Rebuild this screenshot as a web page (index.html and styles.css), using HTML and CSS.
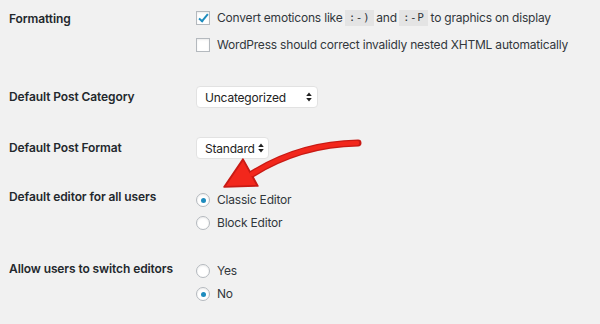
FILE: index.html
```html
<!DOCTYPE html>
<html lang="en">
	<head>
		<meta charset="UTF-8" />
		<title>Writing Settings</title>
		<link rel="stylesheet" href="styles.css">
	</head>
	<body>
		<div class="settings">
			<div class="row row-formatting">
				<div class="label">Formatting</div>
				<div class="field">
					<label class="option"><span class="checkbox checked"></span>Convert emoticons like <code>:-)</code> and <code>:-P</code> to graphics on display</label>
					<label class="option"><span class="checkbox"></span>WordPress should correct invalidly nested XHTML automatically</label>
				</div>
			</div>

			<div class="row row-select row-category">
				<div class="label">Default Post Category</div>
				<div class="field">
					<div class="select select-wide">
						<span>Uncategorized</span>
						<svg class="arrows" width="6" height="10" viewBox="0 0 6 10"><path d="M3 0.5 L5.8 4 H0.2 Z M3 9.5 L5.8 6 H0.2 Z" fill="#222" /></svg>
					</div>
				</div>
			</div>

			<div class="row row-select row-format">
				<div class="label">Default Post Format</div>
				<div class="field">
					<div class="select">
						<span>Standard</span>
						<svg class="arrows" width="6" height="10" viewBox="0 0 6 10"><path d="M3 0.5 L5.8 4 H0.2 Z M3 9.5 L5.8 6 H0.2 Z" fill="#222" /></svg>
					</div>
				</div>
			</div>

			<div class="row row-radio row-editor">
				<div class="label">Default editor for all users</div>
				<div class="field">
					<label class="option"><span class="radio checked"></span>Classic Editor</label>
					<label class="option"><span class="radio"></span>Block Editor</label>
				</div>
			</div>

			<div class="row row-radio row-switch">
				<div class="label">Allow users to switch editors</div>
				<div class="field">
					<label class="option"><span class="radio"></span>Yes</label>
					<label class="option"><span class="radio checked"></span>No</label>
				</div>
			</div>
		</div>

		<!-- annotation arrow drawn over the form -->
		<svg class="annotation" width="600" height="324" viewBox="0 0 600 324">
			<path d="M358 143 Q300 144 252 174" fill="none" stroke="#c81a14" stroke-width="7" stroke-linecap="round" />
			<polygon points="243,159 224,187 258,186" fill="#c81a14" stroke="#c81a14" stroke-width="1.5" stroke-linejoin="round" />
			<path d="M357 143 Q300 144 252 174" fill="none" stroke="#f2271c" stroke-width="4.5" stroke-linecap="round" />
			<polygon points="243,161 226,186 256,185" fill="#f2271c" />
		</svg>
	</body>
</html>
```

FILE: styles.css
```css
:root {
	--bg-color: #f1f1f1;
	--label-color: #23282d;
	--text-color: #32373c;
	--border-color: #b4b9be;
	--accent: #1e8cbe;
	--code-bg: #e4e4e4;
}

body {
	margin: 0;
	width: 600px;
	height: 324px;
	overflow: hidden;
	background-color: var(--bg-color);
	font-family: "Inter", "Liberation Sans", sans-serif;
	font-size: 12px;
	letter-spacing: -0.05px;
	color: var(--text-color);
}

.settings {
	display: flex;
	flex-direction: column;
	padding-left: 9px;
}

.row {
	display: grid;
	grid-template-columns: 187px 1fr;
	align-items: start;
}

.label {
	font-weight: 600;
	color: var(--label-color);
	line-height: 18px;
	letter-spacing: -0.1px;
}

.field {
	display: flex;
	flex-direction: column;
	letter-spacing: -0.2px;
}

.option {
	display: flex;
	align-items: center;
	height: 18px;
	line-height: 18px;
	white-space: pre;
}

/* formatting checkboxes */
.row-formatting {
	padding-top: 9px;
}

.row-formatting .label {
	padding-top: 1px;
}

.row-formatting .field {
	gap: 9px;
}

.checkbox {
	width: 12px;
	height: 12px;
	margin-right: 7px;
	border: 1px solid var(--border-color);
	background: #fff;
	box-shadow: inset 0 1px 2px rgba(0, 0, 0, 0.08);
	position: relative;
	flex-shrink: 0;
}

.checkbox.checked::after {
	content: "";
	position: absolute;
	left: 4px;
	top: 0;
	width: 3px;
	height: 8px;
	border: solid var(--accent);
	border-width: 0 2px 2px 0;
	transform: rotate(40deg);
}

code {
	font-family: "DejaVu Sans Mono", "Liberation Mono", monospace;
	font-size: 11px;
	letter-spacing: 0.5px;
	background: var(--code-bg);
	padding: 0 4px;
	margin: 0 -1px;
	line-height: 16px;
}

/* selects */
.row-select {
	align-items: center;
}

.row-category {
	margin-top: 32px;
}

.row-format {
	margin-top: 29px;
}

.select {
	display: inline-flex;
	align-items: center;
	justify-content: space-between;
	align-self: flex-start;
	height: 22px;
	box-sizing: border-box;
	padding: 0 4px 0 8px;
	background: #fff;
	border: 1px solid #e2e2e2;
	border-radius: 4px;
	color: #222;
	gap: 3px;
}

.select-wide {
	width: 122px;
	padding-right: 5px;
}

.arrows {
	display: block;
	flex-shrink: 0;
}

/* radio groups */
.row-editor {
	margin-top: 29px;
}

.row-switch {
	margin-top: 28px;
}

.row-radio .field {
	padding-top: 3px;
	gap: 5px;
}

.row-switch .field {
	padding-top: 2px;
}

.radio {
	width: 12px;
	height: 12px;
	margin-right: 7px;
	border: 1px solid var(--border-color);
	border-radius: 50%;
	background: #fff;
	box-shadow: inset 0 1px 2px rgba(0, 0, 0, 0.08);
	display: flex;
	align-items: center;
	justify-content: center;
	flex-shrink: 0;
}

.radio.checked::after {
	content: "";
	width: 5px;
	height: 5px;
	border-radius: 50%;
	background: var(--accent);
}

.annotation {
	position: absolute;
	top: 0;
	left: 0;
	pointer-events: none;
}
```
